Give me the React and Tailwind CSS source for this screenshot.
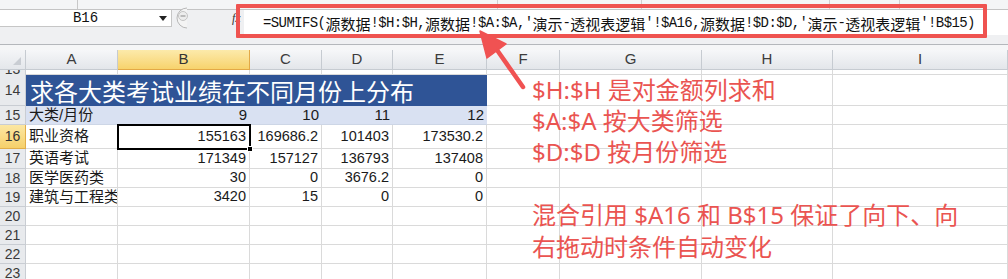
import React from "react";

const formula =
  "=SUMIFS(源数据!$H:$H,源数据!$A:$A,'演示-透视表逻辑'!$A16,源数据!$D:$D,'演示-透视表逻辑'!B$15)";

function Formula() {
  const parts = formula.match(/[\u4e00-\u9fff]+|[^\u4e00-\u9fff]+/g);
  return (
    <div className="flex items-center whitespace-pre text-[#111] leading-none">
      {parts.map((p, i) =>
        /[\u4e00-\u9fff]/.test(p) ? (
          <span key={i} className="text-[15px] font-['Noto_Sans_CJK_SC',sans-serif]">
            {p}
          </span>
        ) : (
          <span
            key={i}
            className="text-[14px] tracking-[-0.6px] font-['Liberation_Mono',monospace]"
          >
            {p}
          </span>
        )
      )}
    </div>
  );
}

const colW = [
  "w-[92px]",
  "w-[132px]",
  "w-[72px]",
  "w-[71px]",
  "w-[94px]",
  "w-[73px]",
  "w-[142px]",
  "w-[131px]",
  "w-[175px]",
];
const colNames = ["A", "B", "C", "D", "E", "F", "G", "H", "I"];

const rows = [
  { n: "16", h: "h-[24px]", sel: true, v: ["职业资格", "155163", "169686.2", "101403", "173530.2"] },
  { n: "17", h: "h-[20px]", v: ["英语考试", "171349", "157127", "136793", "137408"] },
  { n: "18", h: "h-[19px]", v: ["医学医药类", "30", "0", "3676.2", "0"] },
  { n: "19", h: "h-[19px]", v: ["建筑与工程类", "3420", "15", "0", "0"] },
  { n: "20", h: "h-[19px]", v: [] },
  { n: "21", h: "h-[19px]", v: [] },
  { n: "22", h: "h-[19px]", v: [] },
  { n: "23", h: "h-[19px]", v: [] },
];

const cellBase =
  "h-full shrink-0 box-border border-r border-b border-[#DADADA] flex items-center px-[3px] overflow-hidden whitespace-nowrap";
const cellFont = "font-['Liberation_Sans','Noto_Sans_CJK_SC',sans-serif] text-[#1a1a1a]";

function RowHead({ n, sel }) {
  return (
    <div
      className={
        "w-[26px] h-full shrink-0 box-border border-r border-b flex items-center justify-center text-[14px] font-['Liberation_Sans',sans-serif] " +
        (sel
          ? "bg-linear-to-b from-[#FCE7A2] to-[#F6D06A] border-[#E2AE4A] text-[#333]"
          : "bg-[#E8EAED] border-[#C9CDD3] text-[#3a3a3a]")
      }
    >
      {n}
    </div>
  );
}

export default function App() {
  return (
    <div className="relative w-[1008px] h-[279px] overflow-hidden bg-white">
      {/* top area */}
      <div className="flex flex-col h-[50px] bg-[#EFF0F2]">
        <div className="flex h-[10px] shrink-0 bg-[#F4F5F6] border-b border-[#C4C4C4]">
          <div className="w-[78px] h-full border-r border-[#C8C8C8]" />
          <div className="w-[420px] h-full border-r border-[#D0D0D0]" />
          <div className="w-[144px] h-full border-r border-[#D0D0D0]" />
          <div className="w-[188px] h-full border-r border-[#D0D0D0]" />
          <div className="w-[70px] h-full border-r border-[#D0D0D0]" />
        </div>
        <div className="flex items-start h-[35px] shrink-0 border-b border-[#B4B7BB]">
          <div className="relative w-[172px] h-[17px] bg-white border-b border-r border-[#C6C6C6] flex items-center justify-center">
            <span className="text-[14px] font-['Liberation_Mono',monospace] text-[#111] leading-none">
              B16
            </span>
            <svg className="absolute left-[159px] top-[6px]" width="8" height="5" viewBox="0 0 8 5">
              <path d="M0 0 L8 0 L4 5 Z" fill="#222" />
            </svg>
          </div>
          <svg className="ml-[1px] -mt-[3px]" width="16" height="22" viewBox="0 0 16 22">
            <path d="M14 1 A10 10 0 0 0 14 21" fill="#F4F4F4" stroke="#B8B8B8" />
            <circle cx="10" cy="9" r="4.5" fill="#EDEDED" stroke="#C4C4C4" />
            <line x1="7.5" y1="9" x2="12.5" y2="9" stroke="#9A9A9A" strokeWidth="1.2" />
          </svg>
          <div className="w-[43px]" />
          <div className="w-[12px] pt-[2px] text-[12px] italic font-['Liberation_Serif',serif] text-[#333] leading-none">
            fx
          </div>
          <div className="flex-1 h-[25px] bg-white flex items-center pl-[19px] pt-[1px]">
            <Formula />
          </div>
        </div>
        <div className="flex-1 bg-[#F5F6F7]" />
      </div>

      {/* column header */}
      <div className="flex h-[20px]">
        <div className="w-[26px] h-full shrink-0 box-border border-r border-b border-[#C6CBD1] bg-linear-to-b from-[#F4F5F7] to-[#E4E7EB] relative">
          <svg className="absolute right-[4px] bottom-[4px]" width="8" height="8" viewBox="0 0 8 8">
            <path d="M8 0 L8 8 L0 8 Z" fill="#C9CDD3" />
          </svg>
        </div>
        {colNames.map((c, i) => (
          <div
            key={c}
            className={
              colW[i] +
              " h-full shrink-0 box-border border-r border-b flex items-center justify-center text-[15px] font-['Liberation_Sans',sans-serif] " +
              (i === 1
                ? "bg-linear-to-b from-[#FCEAAA] to-[#F7D36C] border-[#E3A946] text-[#333]"
                : "bg-linear-to-b from-[#F6F7F9] to-[#E3E6EA] border-[#C6CBD1] text-[#3c3c3c]")
            }
          >
            {c}
          </div>
        ))}
      </div>

      {/* row 13 clipped */}
      <div className="flex h-[5px] overflow-hidden">
        <div className="w-[26px] h-full shrink-0 box-border border-r border-[#C9CDD3] bg-[#E8EAED] flex items-end justify-center overflow-hidden">
          <span className="text-[14px] leading-[14px] mb-[-1px] text-[#3a3a3a] font-['Liberation_Sans',sans-serif] shrink-0">
            13
          </span>
        </div>
        {colNames.map((c, i) => (
          <div key={c} className={colW[i] + " " + cellBase} />
        ))}
      </div>

      {/* row 14 title */}
      <div className="flex h-[31px]">
        <RowHead n="14" />
        <div className="w-[461px] h-full shrink-0 bg-[#2F5496] flex items-center pl-[4px] pt-[1px] text-white text-[24px] font-['Noto_Sans_CJK_SC',sans-serif] leading-none whitespace-nowrap">
          求各大类考试业绩在不同月份上分布
        </div>
        {colNames.slice(5).map((c, j) => (
          <div key={c} className={colW[j + 5] + " " + cellBase} />
        ))}
      </div>

      {/* row 15 band */}
      <div className="flex h-[19px]">
        <RowHead n="15" />
        {["大类/月份", "9", "10", "11", "12"].map((t, i) => (
          <div
            key={i}
            className={
              colW[i] +
              " h-full shrink-0 box-border border-b border-[#CDD6E6] bg-[#D9E1F2] flex items-center px-[3px] text-[15px] whitespace-nowrap " +
              cellFont +
              (i === 0 ? " justify-start" : " justify-end")
            }
          >
            {t}
          </div>
        ))}
        {colNames.slice(5).map((c, j) => (
          <div key={c} className={colW[j + 5] + " " + cellBase} />
        ))}
      </div>

      {rows.map((r) => (
        <div key={r.n} className={"flex " + r.h}>
          <RowHead n={r.n} sel={r.sel} />
          {colNames.map((c, i) => (
            <div
              key={c}
              className={
                colW[i] +
                " " +
                cellBase +
                " " +
                cellFont +
                (i === 0 ? " justify-start text-[15px]" : " justify-end text-[14.5px]")
              }
            >
              {r.v[i] || ""}
            </div>
          ))}
        </div>
      ))}

      {/* selection box */}
      <div className="absolute left-[117px] top-[124px] w-[134px] h-[26px] border-2 border-black" />
      <div className="absolute left-[247px] top-[146px] w-[6px] h-[6px] bg-black border border-white" />

      {/* red formula box */}
      <div className="absolute left-[236px] top-[4px] w-[751px] h-[34px] border-4 border-[#EF5350] rounded-[1px]" />

      {/* annotations */}
      <div className="absolute left-[532px] top-[74px] text-[24px] leading-[31px] text-[#EA5451] font-['Noto_Sans','Noto_Sans_CJK_SC',sans-serif] whitespace-nowrap">
        <div>$H:$H 是对金额列求和</div>
        <div>$A:$A 按大类筛选</div>
        <div>$D:$D 按月份筛选</div>
      </div>
      <div className="absolute left-[532px] top-[199px] text-[24px] leading-[32px] text-[#EA5451] font-['Noto_Sans','Noto_Sans_CJK_SC',sans-serif] whitespace-nowrap">
        <div>混合引用 $A16 和 B$15 保证了向下、向</div>
        <div>右拖动时条件自动变化</div>
      </div>

      {/* arrow */}
      <svg className="absolute left-0 top-0 pointer-events-none" width="1008" height="279" viewBox="0 0 1008 279">
        <line x1="497" y1="50" x2="523" y2="87" stroke="#F05252" strokeWidth="4.5" strokeLinecap="round" />
        <path d="M480 31 L487 58 L506 44 Z" fill="#F05252" stroke="#F05252" strokeWidth="1.5" strokeLinejoin="round" />
      </svg>
    </div>
  );
}
